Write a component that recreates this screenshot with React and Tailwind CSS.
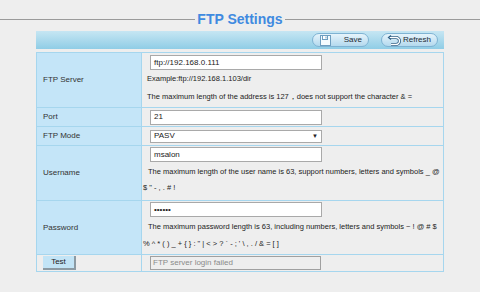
import React from "react";

function Floppy() {
  return (
    <svg width="11" height="11" viewBox="0 0 11 11">
      <rect x="0.5" y="0.5" width="10" height="10" fill="#f4fbff" stroke="#6d9ec0" />
      <rect x="2.5" y="0.5" width="5" height="4" fill="#ffffff" stroke="#6d9ec0" />
      <rect x="5.5" y="1.5" width="1" height="2" fill="#6d9ec0" />
    </svg>
  );
}

function Undo() {
  return (
    <svg width="14" height="11" viewBox="0 0 14 11">
      <path d="M2 2.5h7a3.5 3.5 0 0 1 0 7H4" fill="none" stroke="#2f5f85" strokeWidth="3" />
      <path d="M2 2.5h7a3.5 3.5 0 0 1 0 7H4" fill="none" stroke="#ffffff" strokeWidth="1.4" />
      <path d="M4 0.5 1.5 2.5 4 4.5" fill="none" stroke="#2f5f85" strokeWidth="1.2" />
    </svg>
  );
}

function Btn({ icon, label }) {
  return (
    <div className="flex h-[14px] w-[57px] items-center rounded-full border border-[#7fb3d3] bg-gradient-to-b from-[#e6f4fb] to-[#b3d9ee] pl-[5px] pr-[6px]">
      <div className="flex w-[14px] justify-center">{icon}</div>
      <span className="ml-auto text-[8px] leading-none text-[#1d2a33]">{label}</span>
    </div>
  );
}

function Input({ value, className = "" }) {
  return (
    <div
      className={`flex h-[15px] w-[172px] items-center border border-[#a9a9a9] bg-white pl-[3px] text-[8px] leading-none text-[#222] ${className}`}
    >
      {value}
    </div>
  );
}

export default function App() {
  const cellL = "border border-[#a6d6ee] bg-[#c4e5f8] pl-[6px] text-[8px] text-[#333] align-middle";
  const cellR = "border border-[#a6d6ee] pl-[8px] text-[8px] text-[#222] align-middle";
  const desc = "text-[7.5px] text-[#222]";
  const pwText =
    "The maximum password length is 63, including numbers, letters and symbols ~ ! @ # $ % ^ * ( ) _ + { } : \" | < > ? ` - ; ' \\ , . / & = [ ]";
  return (
    <div
      className="h-[292px] w-[480px] overflow-hidden bg-[#eeeeee] text-[#222]"
      style={{ fontFamily: '"Liberation Sans", Arial, sans-serif' }}
    >
      <div className="flex items-center pt-[12px]">
        <div className="h-[1px] flex-1 bg-[#9a9a9a]" />
        <div className="px-[2px] text-[14px] font-bold leading-[14px] text-[#3f8ae0]">FTP Settings</div>
        <div className="h-[1px] flex-1 bg-[#9a9a9a]" />
      </div>
      <div className="ml-[36px] mt-[5px] w-[408px]">
        <div className="flex h-[18px] items-center justify-end gap-[12px] bg-gradient-to-b from-[#c6e6f3] to-[#8fcde6] pr-[6px]">
          <Btn icon={<Floppy />} label="Save" />
          <Btn icon={<Undo />} label="Refresh" />
        </div>
        <table className="mt-[3px] w-full border-collapse">
          <tbody>
            <tr className="h-[55px]">
              <td className={`${cellL} w-[105px]`}>FTP Server</td>
              <td className="border border-[#a6d6ee] pl-[5px] pt-[2px] align-top">
                <Input value="ftp://192.168.0.111" className="ml-[3px]" />
                <div className={`${desc} leading-[18px]`}>Example:ftp://192.168.1.103/dir</div>
                <div className={`${desc} leading-[18px]`}>
                  The maximum length of the address is 127，does not support the character &amp; =
                </div>
              </td>
            </tr>
            <tr className="h-[19px]">
              <td className={cellL}>Port</td>
              <td className={cellR}>
                <Input value="21" className="h-[14px]" />
              </td>
            </tr>
            <tr className="h-[19px]">
              <td className={cellL}>FTP Mode</td>
              <td className={cellR}>
                <div className="flex h-[13px] w-[172px] items-center border border-[#a9a9a9] bg-white pl-[3px] pr-[3px] text-[8px] leading-none">
                  <span>PASV</span>
                  <span className="ml-auto text-[6px]">▼</span>
                </div>
              </td>
            </tr>
            <tr className="h-[55px]">
              <td className={cellL}>Username</td>
              <td className="border border-[#a6d6ee] pl-[1px] pt-[1px] align-top">
                <Input value="msalon" className="ml-[7px]" />
                <div className={`${desc} mt-[2px] leading-[16px]`}>
                  <span className="pl-[5px]">The maximum length of the user name is 63, support numbers, letters and symbols _ @ $ " - , . # !</span>
                </div>
              </td>
            </tr>
            <tr className="h-[54px]">
              <td className={cellL}>Password</td>
              <td className="border border-[#a6d6ee] pl-[1px] pt-[1px] align-top">
                <Input value="••••••" className="ml-[7px] text-[6px]" />
                <div className={`${desc} mt-[1px] pr-[4px] leading-[17px]`}>
                  <span className="pl-[5px]">{pwText}</span>
                </div>
              </td>
            </tr>
            <tr className="h-[17px]">
              <td className="border border-[#a6d6ee] pl-[6px] align-middle">
                <div className="flex h-[14px] w-[33px] items-center justify-center border-b-2 border-r-2 border-[#8c9aa3] bg-[#c2e4f6] text-[8px] leading-none">
                  Test
                </div>
              </td>
              <td className={cellR}>
                <div className="flex h-[14px] w-[171px] items-center border border-[#a0a0a0] bg-[#eeeeee] pl-[2px] text-[8px] leading-none text-[#8a8a8a]">
                  FTP server login failed
                </div>
              </td>
            </tr>
          </tbody>
        </table>
      </div>
    </div>
  );
}
